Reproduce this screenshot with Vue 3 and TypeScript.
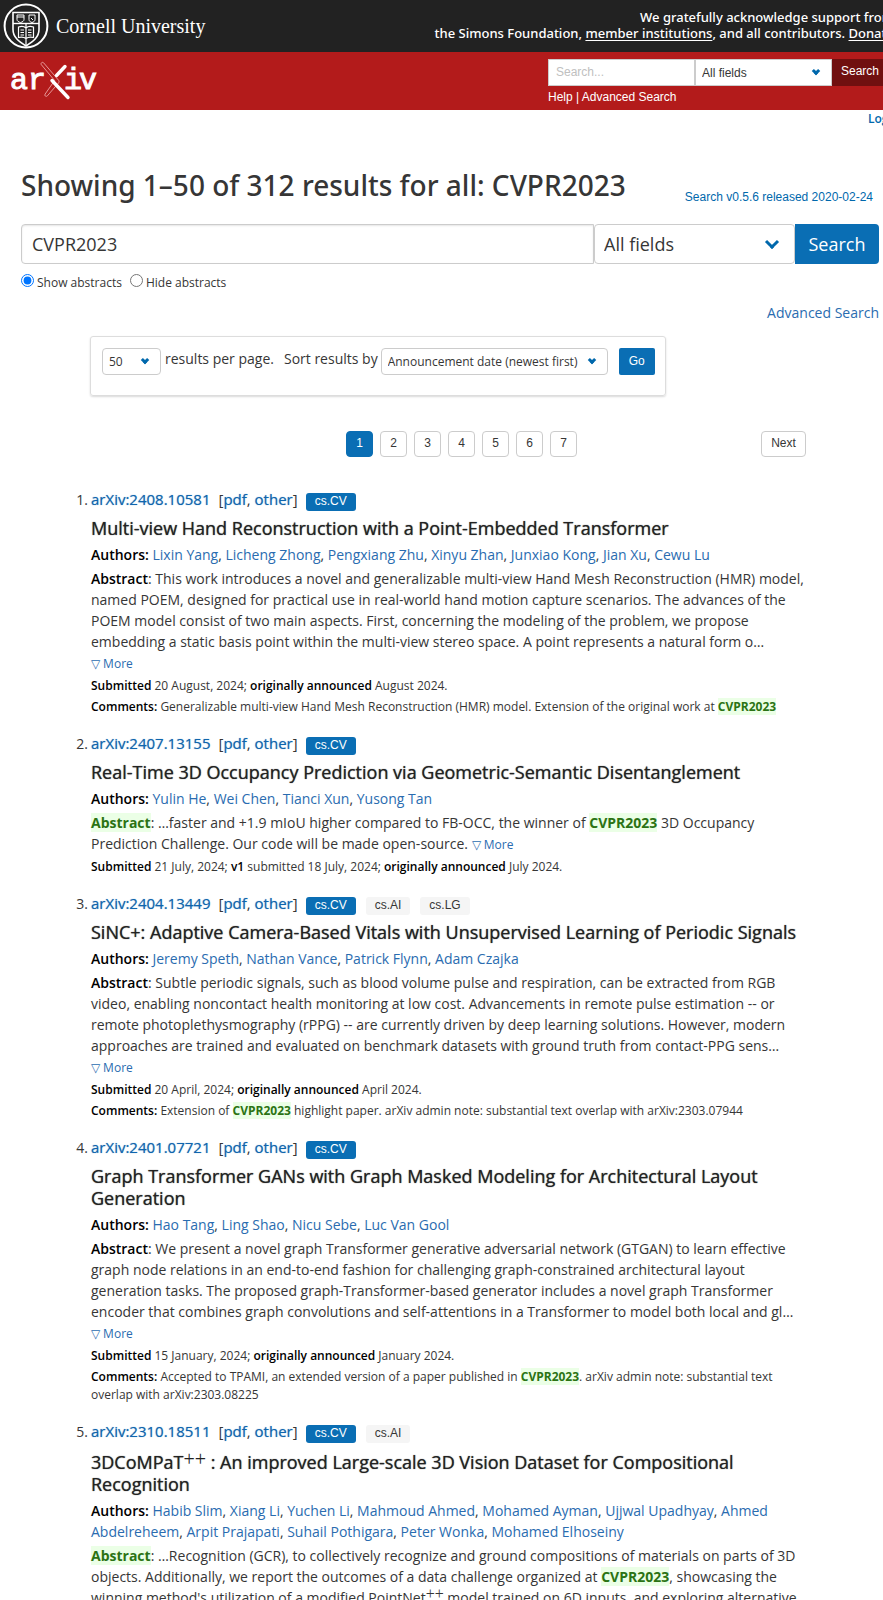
<script setup lang="ts">
import { ref } from 'vue'

type Kind = 'plain' | 'mark' | 'strong' | 'math'
interface Segment { kind: Kind; text: string }
interface Paper {
  id: string
  tags: string[]
  title: string
  authors: string[]
  abstract: string
  abstractMarked?: boolean
  submitted: string
  comments?: string
}

// Inline markup: [hit] is a search hit, {label} a strong label, ^x^ a superscript formula.
function parse(source: string): Segment[] {
  return source
    .split(/(\[[^\]]+\]|\{[^}]+\}|\^[^^]+\^)/)
    .filter((part) => part.length > 0)
    .map((part): Segment => {
      const inner = part.slice(1, -1)
      if (part.startsWith('[')) return { kind: 'mark', text: inner }
      if (part.startsWith('{')) return { kind: 'strong', text: inner }
      if (part.startsWith('^')) return { kind: 'math', text: inner }
      return { kind: 'plain', text: part }
    })
}

const elements: Record<Kind, string> = { plain: 'span', mark: 'mark', strong: 'strong', math: 'sup' }

const headerQuery = ref('')
const query = ref('CVPR2023')
const abstracts = ref('show')
const pages = [1, 2, 3, 4, 5, 6, 7]

const papers: Paper[] = [
  {
    id: '2408.10581',
    tags: ['cs.CV'],
    title: 'Multi-view Hand Reconstruction with a Point-Embedded Transformer',
    authors: ['Lixin Yang', 'Licheng Zhong', 'Pengxiang Zhu', 'Xinyu Zhan', 'Junxiao Kong', 'Jian Xu', 'Cewu Lu'],
    abstract: 'This work introduces a novel and generalizable multi-view Hand Mesh Reconstruction (HMR) model, named POEM, designed for practical use in real-world hand motion capture scenarios. The advances of the POEM model consist of two main aspects. First, concerning the modeling of the problem, we propose embedding a static basis point within the multi-view stereo space. A point represents a natural form o…',
    submitted: '{Submitted} 20 August, 2024; {originally announced} August 2024.',
    comments: 'Generalizable multi-view Hand Mesh Reconstruction (HMR) model. Extension of the original work at [CVPR2023]',
  },
  {
    id: '2407.13155',
    tags: ['cs.CV'],
    title: 'Real-Time 3D Occupancy Prediction via Geometric-Semantic Disentanglement',
    authors: ['Yulin He', 'Wei Chen', 'Tianci Xun', 'Yusong Tan'],
    abstract: '…faster and +1.9 mIoU higher compared to FB-OCC, the winner of [CVPR2023] 3D Occupancy Prediction Challenge. Our code will be made open-source.',
    abstractMarked: true,
    submitted: '{Submitted} 21 July, 2024; {v1} submitted 18 July, 2024; {originally announced} July 2024.',
  },
  {
    id: '2404.13449',
    tags: ['cs.CV', 'cs.AI', 'cs.LG'],
    title: 'SiNC+: Adaptive Camera-Based Vitals with Unsupervised Learning of Periodic Signals',
    authors: ['Jeremy Speth', 'Nathan Vance', 'Patrick Flynn', 'Adam Czajka'],
    abstract: 'Subtle periodic signals, such as blood volume pulse and respiration, can be extracted from RGB video, enabling noncontact health monitoring at low cost. Advancements in remote pulse estimation -- or remote photoplethysmography (rPPG) -- are currently driven by deep learning solutions. However, modern approaches are trained and evaluated on benchmark datasets with ground truth from contact-PPG sens…',
    submitted: '{Submitted} 20 April, 2024; {originally announced} April 2024.',
    comments: 'Extension of [CVPR2023] highlight paper. arXiv admin note: substantial text overlap with arXiv:2303.07944',
  },
  {
    id: '2401.07721',
    tags: ['cs.CV'],
    title: 'Graph Transformer GANs with Graph Masked Modeling for Architectural Layout Generation',
    authors: ['Hao Tang', 'Ling Shao', 'Nicu Sebe', 'Luc Van Gool'],
    abstract: 'We present a novel graph Transformer generative adversarial network (GTGAN) to learn effective graph node relations in an end-to-end fashion for challenging graph-constrained architectural layout generation tasks. The proposed graph-Transformer-based generator includes a novel graph Transformer encoder that combines graph convolutions and self-attentions in a Transformer to model both local and gl…',
    submitted: '{Submitted} 15 January, 2024; {originally announced} January 2024.',
    comments: 'Accepted to TPAMI, an extended version of a paper published in [CVPR2023]. arXiv admin note: substantial text overlap with arXiv:2303.08225',
  },
  {
    id: '2310.18511',
    tags: ['cs.CV', 'cs.AI'],
    title: '3DCoMPaT^++^ : An improved Large-scale 3D Vision Dataset for Compositional Recognition',
    authors: ['Habib Slim', 'Xiang Li', 'Yuchen Li', 'Mahmoud Ahmed', 'Mohamed Ayman', 'Ujjwal Upadhyay', 'Ahmed Abdelreheem', 'Arpit Prajapati', 'Suhail Pothigara', 'Peter Wonka', 'Mohamed Elhoseiny'],
    abstract: '…Recognition (GCR), to collectively recognize and ground compositions of materials on parts of 3D objects. Additionally, we report the outcomes of a data challenge organized at [CVPR2023], showcasing the winning method\'s utilization of a modified PointNet^++^ model trained on 6D inputs, and exploring alternative',
    abstractMarked: true,
    submitted: '',
  },
]
</script>

<template>
  <div class="viewport">
    <div class="page">
      <header>
        <div class="cornell">
          <a class="cornell-logo" href="#">
            <svg width="46" height="46" viewBox="0 0 46 46" fill="none" stroke="#fff" aria-hidden="true">
              <circle cx="23" cy="23" r="21.4" stroke-width="2" />
              <path d="M10 9.5h26v17c0 8-6 12-13 16.500-7-4.500-13-8.500-13-16.500z" stroke-width="1.600" />
              <path d="M10 20.500h26" stroke-width="1.400" />
              <path d="M14 12h7v4.500c0 1.500-1.500 2.500-3.500 3-2-.5-3.500-1.500-3.500-3zM26 12h6v4.500c0 1.500-1.200 2.500-3 3-1.800-.5-3-1.500-3-3z" />
              <path d="M14 14h7M28 15l2 2" />
              <path d="M15.500 24c3-1 5.500-.8 7.500 1 2-1.800 4.500-2 7.500-1v10.500c-3-.8-5.500-.5-7.500 1-2-1.500-4.500-1.800-7.500-1zM23 20.500v22" stroke-width="1.200" />
              <path d="M17.500 27h3.500M17.500 29.500h3.500M17.500 32h3.500M25 27h3.500M25 29.500h3.500M25 32h3.500" />
            </svg>
            <span>Cornell University</span>
          </a>
          <p class="support">
            We gratefully acknowledge support from<br>
            the Simons Foundation, <a href="#">member institutions</a>, and all contributors. <a href="#">Donate</a>
          </p>
        </div>
        <div class="banner">
          <a class="arxiv-logo" href="#" aria-label="arXiv">
            <svg width="90" height="42" viewBox="0 0 90 42" fill="none">
              <text class="logo-text" y="29" x="0 18 54 69">ariv</text>
              <path d="M31.200 4.500c-.8-1.400 1.300-3 2.400-1.700l15 17.500c.8 1 .5 2-.2 2.800l-11 12.700c-1.300 1.400-3.400-.1-2.300-1.700l9.500-13.600z" stroke="#f3b5b5" stroke-width=".8" />
              <path d="M55 6.500l-8.500 9M42 20.500l16 17" stroke="#fff" stroke-width="3.400" stroke-linecap="round" />
            </svg>
          </a>
          <form class="mini-search" @submit.prevent>
            <div class="mini-row">
              <input v-model="headerQuery" type="text" placeholder="Search..." aria-label="Search term or terms">
              <span class="select mini-select">
                <select aria-label="Field to search"><option>All fields</option></select>
              </span>
              <button type="submit">Search</button>
            </div>
            <p><a href="#">Help</a> | <a href="#">Advanced Search</a></p>
          </form>
        </div>
        <div class="login"><a href="#">Login</a></div>
      </header>

      <main>
        <div class="heading">
          <h1>Showing 1–50 of 312 results for all: CVPR2023</h1>
          <a href="#">Search v0.5.6 released 2020-02-24</a>
        </div>

        <form @submit.prevent>
          <div class="search-row">
            <input v-model="query" type="text" aria-label="Search term or terms">
            <span class="select large-select">
              <select aria-label="Field to search"><option>All fields</option></select>
            </span>
            <button type="submit">Search</button>
          </div>
          <div class="radios">
            <label><input v-model="abstracts" type="radio" name="abstracts" value="show"> Show abstracts</label>
            <label><input v-model="abstracts" type="radio" name="abstracts" value="hide"> Hide abstracts</label>
          </div>
          <p class="advanced"><a href="#">Advanced Search</a></p>
        </form>

        <div class="results">
          <form class="sorting" @submit.prevent>
            <span class="select size-select">
              <select id="size"><option>50</option></select>
            </span>
            <label class="per-page" for="size">results per page.</label>
            <label class="sort-by" for="order">Sort results by</label>
            <span class="select order-select">
              <select id="order"><option>Announcement date (newest first)</option></select>
            </span>
            <button type="submit">Go</button>
          </form>

          <nav aria-label="pagination">
            <ul>
              <li v-for="page in pages" :key="page">
                <a href="#" :class="{ current: page === 1 }">{{ page }}</a>
              </li>
            </ul>
            <a class="next" href="#">Next</a>
          </nav>

          <ol>
            <li v-for="(paper, index) in papers" :key="paper.id" class="paper">
              <span class="number">{{ index + 1 }}.</span>
              <div class="id-line">
                <p><a href="#">arXiv:{{ paper.id }}</a><span class="formats">[<a href="#">pdf</a>, <a href="#">other</a>]</span></p>
                <span v-for="(tag, t) in paper.tags" :key="tag" class="tag" :class="{ primary: t === 0 }">{{ tag }}</span>
              </div>
              <p class="title">
                <component :is="elements[s.kind]" v-for="(s, i) in parse(paper.title)" :key="i">{{ s.text }}</component>
              </p>
              <p class="authors">
                <strong>Authors:</strong>
                <template v-for="(author, i) in paper.authors" :key="author">{{ i ? ', ' : ' ' }}<a href="#">{{ author }}</a></template>
              </p>
              <p class="abstract">
                <component :is="paper.abstractMarked ? 'mark' : 'strong'">Abstract</component>:
                <component :is="elements[s.kind]" v-for="(s, i) in parse(paper.abstract)" :key="i">{{ s.text }}</component>
                {{ ' ' }}<a v-if="paper.submitted" class="more" href="#">▽ More</a>
              </p>
              <p v-if="paper.submitted" class="meta">
                <component :is="elements[s.kind]" v-for="(s, i) in parse(paper.submitted)" :key="i">{{ s.text }}</component>
              </p>
              <p v-if="paper.comments" class="meta">
                <strong>Comments:</strong>{{ ' ' }}
                <component :is="elements[s.kind]" v-for="(s, i) in parse(paper.comments)" :key="i">{{ s.text }}</component>
              </p>
            </li>
          </ol>
        </div>
      </main>
    </div>
  </div>
</template>

<style>
body { margin: 0; background: #fff; }
</style>

<style scoped>
* { box-sizing: border-box; }
.viewport { height: 100vh; overflow: hidden; font-family: "Open Sans", sans-serif; font-size: 14px; line-height: 21px; color: #363636; }
.page { width: calc(100% + 17px); }
p, h1, ol, ul { margin: 0; padding: 0; list-style: none; }
a { color: #2a6cb0; text-decoration: none; }
strong { font-weight: 600; color: #000; }
input, select, button { font-family: inherit; margin: 0; }

.cornell { display: flex; justify-content: space-between; align-items: center; height: 52px; padding: 0 6px 0 3px; background: #222; }
.cornell-logo { display: flex; align-items: center; gap: 7px; color: #fff; font: 20px "Liberation Serif", serif; }
.support { padding-bottom: 2px; color: #fff; font-family: "Noto Sans", sans-serif; font-size: 13px; line-height: 16px; font-weight: 500; text-align: right; }
.support a { color: #fff; text-decoration: underline; text-underline-offset: 2px; }
.banner { display: flex; justify-content: space-between; height: 58px; padding: 7px 12px 0 10px; background: #b31b1b; }
.arxiv-logo svg { display: block; margin-top: 1px; }
.logo-text { font: 30px "Liberation Mono", monospace; fill: #fff; stroke: #fff; stroke-width: 1px; }
.mini-search { width: 340px; font: 12px/18px "Liberation Sans", sans-serif; color: #fff; }
.mini-search p, .mini-search p a { color: #fff; font-weight: 500; }
.mini-search p { margin-top: 2px; }
.mini-row { display: flex; height: 27px; }
.mini-row input { flex: 1; min-width: 0; padding: 0 7px 2px; border: 1px solid #ccc; border-radius: 0; font: 12px "Liberation Sans", sans-serif; }
.mini-row input::placeholder { color: #c0c0c0; }
.mini-row button { width: 56px; border: 0; padding: 0 0 3px; background: #701010; color: #fff; font: 12px "Liberation Sans", sans-serif; }
.login { height: 20px; padding: 0 0 0 868px; font-size: 12px; line-height: 18px; font-weight: 600; }
.login a { color: #0068ac; }

.select { position: relative; display: block; }
.select select { appearance: none; display: block; width: 100%; height: 100%; border: 1px solid #ccc; border-radius: 4px; padding: 0 6px; background: #fff; color: #363636; font-size: 12px; }
.select::after { content: ""; position: absolute; right: 13px; top: 50%; width: 3px; height: 3px; margin-top: -5px; border: solid #0068ac; border-width: 0 3px 3px 0; transform: rotate(45deg); pointer-events: none; box-sizing: content-box; }
.mini-select { width: 137px; }
.mini-select select { border-radius: 0; }

main { padding: 35px 21px 0; }
.heading { display: flex; justify-content: space-between; align-items: flex-end; padding-right: 6px; }
h1 { font-family: "Noto Sans", sans-serif; font-size: 28px; line-height: 40px; font-weight: 500; }
.heading a { font: 12px/15px "Liberation Sans", sans-serif; color: #0068ac; }
.search-row { display: flex; height: 40px; margin-top: 19px; }
.search-row input { flex: 1; min-width: 0; padding: 0 10px; border: 1px solid #ccc; border-radius: 4px 0 0 4px; box-shadow: inset 0 1px 2px rgba(10, 10, 10, .1); color: #363636; font-size: 18px; }
.large-select { width: 201px; }
.large-select select { padding: 0 9px; font-size: 18px; }
.large-select::after { right: 18px; width: 7px; height: 7px; margin-top: -7px; }
.search-row button { width: 84px; padding: 0; border: 0; border-radius: 0 4px 4px 0; background: #0a6eb4; color: #fff; font-size: 18px; }
.radios { display: flex; gap: 8px; margin-top: 8px; font-size: 12px; line-height: 21px; }
.radios label { display: flex; gap: 3px; }
.radios input { width: 13px; height: 13px; margin-top: 2px; }
.advanced { margin-top: 9px; text-align: right; }

.results { margin: 13px 73px 0 70px; }
.sorting { display: flex; width: 576px; height: 60px; margin-left: -1px; padding: 11px 10px 11px 11px; border: 1px solid #ddd; border-radius: 3px; box-shadow: 0 1px 2px rgba(0, 0, 0, .15); white-space: nowrap; }
.sorting .select { height: 27px; }
.sorting label { line-height: 21px; }
.size-select { width: 59px; }
.order-select { width: 227px; }
.per-page { margin-left: 4px; }
.sort-by { margin: 0 3px 0 10px; }
.sorting button { width: 36px; height: 27px; margin-left: 11px; padding: 0 0 2px; border: 0; border-radius: 2px; background: #0a6eb4; color: #fff; font: 12px "Liberation Sans", sans-serif; }

nav { display: grid; grid-template-columns: 1fr auto 1fr; margin-top: 35px; font: 12px/23px "Liberation Sans", sans-serif; }
nav ul { grid-column: 2; display: flex; gap: 7px; margin-left: 26px; }
nav a { display: block; width: 27px; height: 26px; border: 1px solid #ccc; border-radius: 4px; color: #363636; text-align: center; }
nav a.current { background: #0a6eb4; border-color: #0a6eb4; color: #fff; }
nav .next { justify-self: end; width: 45px; }

ol { margin-top: 32px; }
.paper { position: relative; margin-bottom: 17px; }
.number { position: absolute; right: 100%; margin-right: 3px; }
.id-line { display: flex; align-items: flex-start; height: 28px; font-size: 15px; }
.id-line a { color: #0f65ad; text-shadow: 0 0 1px rgba(15, 101, 173, .6); }
.formats { margin-left: 8px; }
.tag { height: 18px; margin: 4px 0 0 10px; padding: 0 9px; border-radius: 3px; background: #f5f5f5; font: 12px/16px "Liberation Sans", sans-serif; }
.id-line p + .tag { margin-left: 8px; }
.tag.primary { background: #0a6eb4; color: #fff; }
.title { margin-bottom: 5px; color: #222; font-size: 18px; line-height: 22px; text-shadow: 0 0 1px rgba(34, 34, 34, .8); }
.abstract { margin-top: 3px; }
mark { background: #ebffe6; color: #2b7314; font-weight: 700; }
sup { font-family: "Liberation Serif", serif; font-size: 16px; font-weight: 400; line-height: 0; vertical-align: 4px; }
.title sup { font-size: 20px; line-height: 21px; vertical-align: 3px; text-shadow: none; }
.more { display: inline-block; font-size: 12px; }
.meta { font-size: 12px; line-height: 18px; margin-top: 3px; }
</style>
